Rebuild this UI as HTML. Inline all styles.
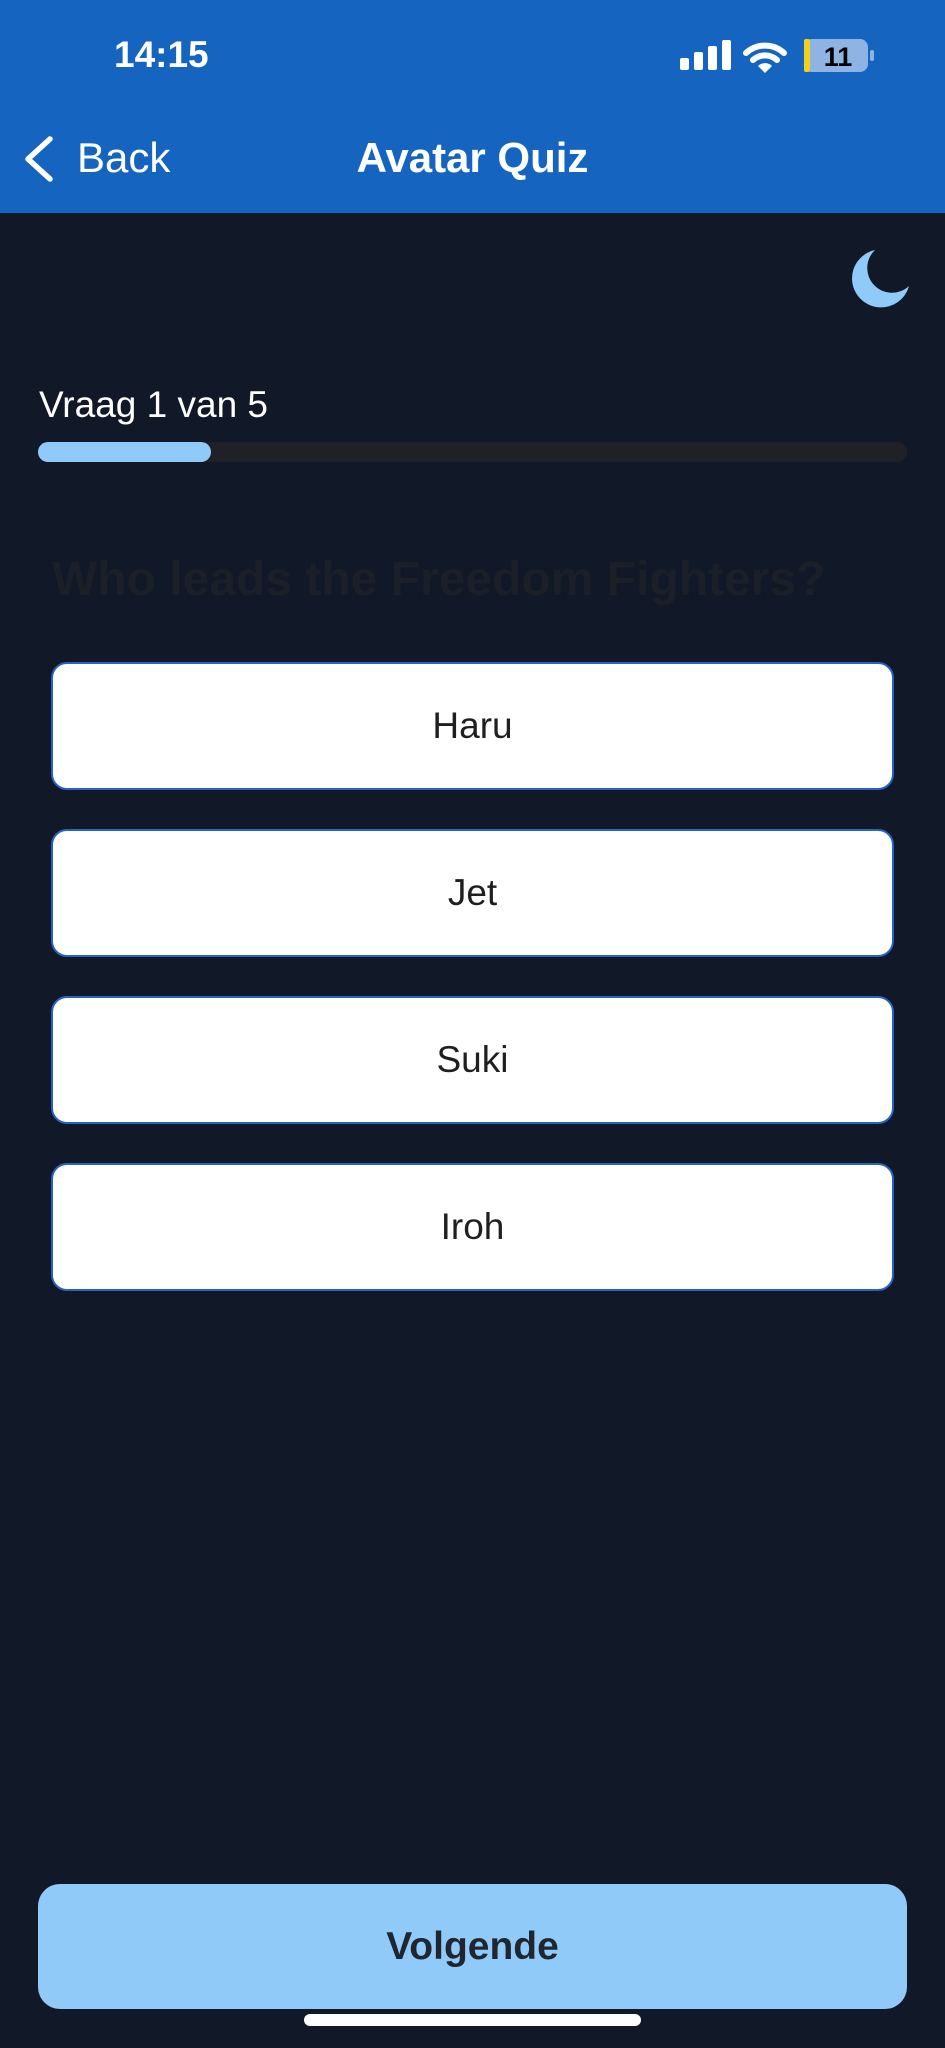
<!DOCTYPE html>
<html><head><meta charset="utf-8"><style>
*{margin:0;padding:0;box-sizing:border-box}
body{width:945px;height:2048px;background:#111827;position:relative;overflow:hidden;font-family:"Liberation Sans",sans-serif}
.hdr{position:absolute;left:0;top:0;width:945px;height:213px;background:#1565C0}
.abs{position:absolute}
.opt{position:absolute;left:51px;width:843px;height:128px;background:#fff;border:2px solid #2563c8;border-radius:16px;display:flex;align-items:center;justify-content:center;font-size:37px;color:#1f1f1f}
</style></head><body>
<div class="hdr"></div>
<div class="abs" style="left:114px;top:34px;font-size:37px;font-weight:bold;color:#fff">14:15</div>
<svg class="abs" style="left:678px;top:38px" width="200" height="38" viewBox="0 0 200 38">
<rect x="2" y="20" width="9" height="12" rx="2" fill="#fff"/>
<rect x="16" y="14" width="9" height="18" rx="2" fill="#fff"/>
<rect x="30" y="8" width="9" height="24" rx="2" fill="#fff"/>
<rect x="44" y="2" width="9" height="30" rx="2" fill="#fff"/>
<path d="M68 15 A28 28 0 0 1 106 15" stroke="#fff" stroke-width="6" fill="none" stroke-linecap="round"/>
<path d="M75 22 A18 18 0 0 1 99 22" stroke="#fff" stroke-width="6" fill="none" stroke-linecap="round"/>
<path d="M80 28 L87 35 L94 28 A10 10 0 0 0 80 28Z" fill="#fff"/>
<rect x="126" y="1" width="64" height="33" rx="8" fill="#8fb3e2"/>
<rect x="126" y="1" width="6" height="33" rx="2" fill="#f2cf1d"/>
<rect x="192" y="12" width="4" height="11" rx="2" fill="#8fb3e2"/>
<text x="160" y="28" text-anchor="middle" font-size="27" font-weight="bold" fill="#000" font-family="Liberation Sans">11</text>
</svg>
<svg class="abs" style="left:20px;top:135px" width="36" height="48"><path d="M30 4 L8 24 L30 44" stroke="#fff" stroke-width="5.5" fill="none" stroke-linecap="round" stroke-linejoin="round"/></svg>
<div class="abs" style="left:77px;top:134px;font-size:42px;color:#fff">Back</div>
<div class="abs" style="left:0;width:945px;top:134px;text-align:center;font-size:42px;font-weight:bold;color:#fff">Avatar Quiz</div>
<svg class="abs" style="left:849px;top:246px" width="64" height="64" viewBox="0 0 64 64"><path d="M26 4 A29 29 0 1 0 60 40 A24 24 0 0 1 26 4Z" fill="#90CAF9"/></svg>
<div class="abs" style="left:39px;top:384px;font-size:37px;color:#fff">Vraag 1 van 5</div>
<div class="abs" style="left:38px;top:442px;width:869px;height:20px;border-radius:10px;background:#1f2126"></div>
<div class="abs" style="left:38px;top:442px;width:173px;height:20px;border-radius:10px;background:#90CAF9"></div>
<div class="abs" style="left:52px;top:552px;font-size:48px;font-weight:bold;color:#1b1f27">Who leads the Freedom Fighters?</div>
<div class="opt" style="top:662px">Haru</div>
<div class="opt" style="top:829px">Jet</div>
<div class="opt" style="top:996px">Suki</div>
<div class="opt" style="top:1163px">Iroh</div>
<div class="abs" style="left:38px;top:1884px;width:869px;height:125px;border-radius:22px;background:#90CAF9;display:flex;align-items:center;justify-content:center;font-size:39px;font-weight:bold;color:#1f2630">Volgende</div>
<div class="abs" style="left:304px;top:2014px;width:337px;height:12px;border-radius:6px;background:#fff"></div>
</body></html>
